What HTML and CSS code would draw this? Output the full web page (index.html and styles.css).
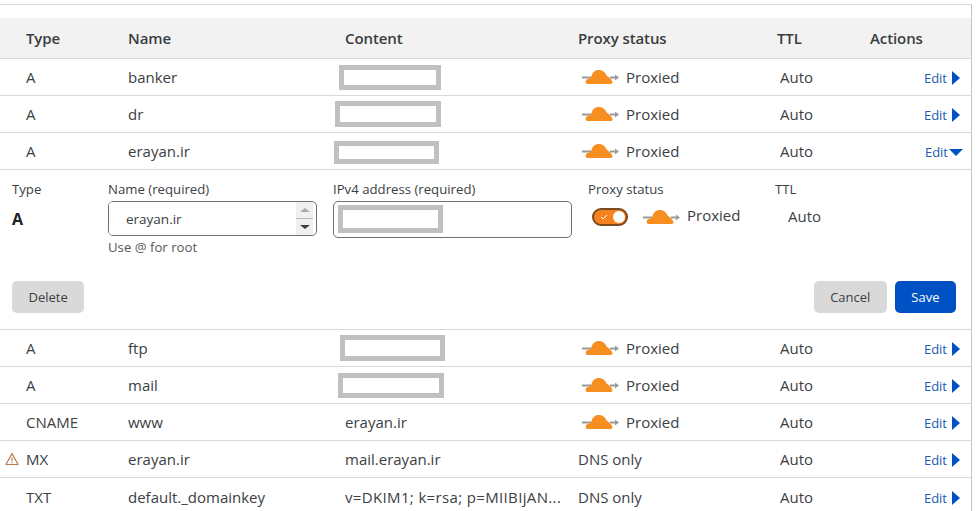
FILE: index.html
```html
<!DOCTYPE html>
<html lang="en">
<head>
    <meta charset="UTF-8">
    <title>DNS records</title>
    <link rel="stylesheet" href="styles.css">
</head>
<body>
<svg class="defs" width="0" height="0">
    <symbol id="cloud" viewBox="0 0 37 14">
        <rect x="0" y="6.5" width="9" height="2" fill="#9a9a9a"/>
        <rect x="28" y="6.5" width="6" height="2" fill="#9a9a9a"/>
        <path d="M33 4.5L37 7.5L33 10.5Z" fill="#9a9a9a"/>
        <path d="M5.5 14C3 14 3 9.5 6 9C8 8.5 9 8 9.5 6C10.5 2.5 13 0 16.5 0C20 0 23 1.5 24.5 5.5C27 7 29.5 9 30.5 12C30.8 13.5 29.5 14 28 14Z" fill="#f78f20"/>
    </symbol>
</svg>
<div class="table">
    <div class="row head">
        <div>Type</div>
        <div>Name</div>
        <div>Content</div>
        <div>Proxy status</div>
        <div>TTL</div>
        <div>Actions</div>
    </div>

    <div class="row">
        <div>A</div>
        <div>banker</div>
        <div><span class="hidden-ip ip-banker"></span></div>
        <div class="proxy"><svg class="cloud"><use href="#cloud"/></svg>Proxied</div>
        <div class="ttl">Auto</div>
        <div class="actions"><a class="edit">Edit</a><span class="arrow-right"></span></div>
    </div>
    <div class="row">
        <div>A</div>
        <div>dr</div>
        <div><span class="hidden-ip ip-dr"></span></div>
        <div class="proxy"><svg class="cloud"><use href="#cloud"/></svg>Proxied</div>
        <div class="ttl">Auto</div>
        <div class="actions"><a class="edit">Edit</a><span class="arrow-right"></span></div>
    </div>
    <div class="row">
        <div>A</div>
        <div>erayan.ir</div>
        <div><span class="hidden-ip ip-root"></span></div>
        <div class="proxy"><svg class="cloud"><use href="#cloud"/></svg>Proxied</div>
        <div class="ttl">Auto</div>
        <div class="actions open"><a class="edit">Edit</a><span class="arrow-down"></span></div>
    </div>

    <form class="editor">
        <div class="fields">
            <div class="field">
                <div class="field-label">Type</div>
                <div class="type-value">A</div>
            </div>
            <div class="field">
                <div class="field-label">Name (required)</div>
                <div class="name-input">
                    <input type="text" value="erayan.ir">
                    <div class="spinner">
                        <div class="spin-half"><span class="spin-up"></span></div>
                        <div class="spin-half"><span class="spin-down"></span></div>
                    </div>
                </div>
                <div class="hint">Use @ for root</div>
            </div>
            <div class="field">
                <div class="field-label">IPv4 address (required)</div>
                <div class="ip-input"><span class="hidden-ip ip-input-box"></span></div>
            </div>
            <div class="field">
                <div class="field-label">Proxy status</div>
                <div class="proxy-edit">
                    <span class="toggle">
                        <svg class="check" viewBox="0 0 8 6"><path d="M1 3l2 2 4-4" fill="none" stroke="#fff" stroke-width="1"/></svg>
                        <span class="knob"></span>
                    </span>
                    <svg class="cloud"><use href="#cloud"/></svg>
                    <span>Proxied</span>
                </div>
            </div>
            <div class="field">
                <div class="field-label">TTL</div>
                <div class="ttl-value">Auto</div>
            </div>
        </div>
        <div class="buttons">
            <button type="button" class="btn">Delete</button>
            <div class="buttons-right">
                <button type="button" class="btn">Cancel</button>
                <button type="button" class="btn primary">Save</button>
            </div>
        </div>
    </form>

    <div class="row">
        <div>A</div>
        <div>ftp</div>
        <div><span class="hidden-ip ip-ftp"></span></div>
        <div class="proxy"><svg class="cloud"><use href="#cloud"/></svg>Proxied</div>
        <div class="ttl">Auto</div>
        <div class="actions"><a class="edit">Edit</a><span class="arrow-right"></span></div>
    </div>
    <div class="row">
        <div>A</div>
        <div>mail</div>
        <div><span class="hidden-ip ip-mail"></span></div>
        <div class="proxy"><svg class="cloud"><use href="#cloud"/></svg>Proxied</div>
        <div class="ttl">Auto</div>
        <div class="actions"><a class="edit">Edit</a><span class="arrow-right"></span></div>
    </div>
    <div class="row">
        <div>CNAME</div>
        <div>www</div>
        <div>erayan.ir</div>
        <div class="proxy"><svg class="cloud"><use href="#cloud"/></svg>Proxied</div>
        <div class="ttl">Auto</div>
        <div class="actions"><a class="edit">Edit</a><span class="arrow-right"></span></div>
    </div>
    <div class="row">
        <div class="type-warn">
            <svg class="warn" viewBox="0 0 14 14">
                <path d="M7 1.5L13 12.5H1Z" fill="none" stroke="#b5794a" stroke-width="1.2" stroke-linejoin="round"/>
                <path d="M7 5.5V9M7 10V11.2" stroke="#b5794a" stroke-width="1.2"/>
            </svg>
            MX
        </div>
        <div>erayan.ir</div>
        <div>mail.erayan.ir</div>
        <div>DNS only</div>
        <div class="ttl">Auto</div>
        <div class="actions"><a class="edit">Edit</a><span class="arrow-right"></span></div>
    </div>
    <div class="row last">
        <div>TXT</div>
        <div>default._domainkey</div>
        <div class="dkim">v=DKIM1; k=rsa; p=MIIBIjAN...</div>
        <div>DNS only</div>
        <div class="ttl">Auto</div>
        <div class="actions"><a class="edit">Edit</a><span class="arrow-right"></span></div>
    </div>
</div>
</body>
</html>
```
FILE: styles.css
```css
html, body {
    height: 511px;
    overflow: hidden;
}

body {
    margin: 0;
    background-color: #fff;
    color: #3c4043;
    font-family: "Open Sans", "Noto Sans", sans-serif;
    font-size: 15px;
}

.defs {
    display: block;
    height: 0;
}

.table {
    width: 972px;
    margin-top: 4px;
    padding-top: 13px;
    box-sizing: border-box;
    height: 507px;
    border-top: 1px solid #d9d9d9;
    border-right: 1px solid #c4c4c4;
}

.row {
    display: grid;
    grid-template-columns: 102px 217px 233px 199px 93px 1fr;
    align-items: center;
    height: 37px;
    padding-left: 26px;
    box-sizing: border-box;
    border-bottom: 1px solid #d9d9d9;
}

.head {
    height: 41px;
    background-color: #f2f2f2;
    font-weight: 600;
    letter-spacing: -0.1px;
    color: #3a3d3f;
}

.last {
    border-bottom: none;
}

.dkim {
    letter-spacing: 0.35px;
}

/* grey boxes that hide the addresses */
.hidden-ip {
    display: block;
    box-sizing: border-box;
    border: 5px solid #c0c0c0;
    background-color: #fff;
}

.ip-banker {
    width: 102px;
    height: 25px;
    margin-left: -6px;
}

.ip-dr {
    width: 106px;
    height: 26px;
    margin-left: -10px;
}

.ip-root {
    width: 105px;
    height: 23px;
    margin: 3px 0 0 -11px;
}

.ip-ftp {
    width: 105px;
    height: 26px;
    margin-left: -5px;
}

.ip-mail {
    width: 106px;
    height: 25px;
    margin-left: -7px;
}

.ip-input-box {
    width: 105px;
    height: 28px;
}

.proxy {
    display: flex;
    align-items: center;
    gap: 7px;
    padding-left: 4px;
}

.cloud {
    width: 37px;
    height: 14px;
    flex: none;
}

.ttl {
    padding-left: 3px;
}

.actions {
    display: flex;
    justify-content: flex-end;
    align-items: center;
    gap: 5px;
    padding: 2px 11px 0 0;
}

.actions.open {
    gap: 1px;
    padding-right: 8px;
}

.edit {
    color: #1a5bab;
    font-size: 13px;
}

.arrow-right {
    width: 0;
    height: 0;
    border-left: 8px solid #0051c3;
    border-top: 7px solid transparent;
    border-bottom: 7px solid transparent;
}

.arrow-down {
    width: 0;
    height: 0;
    border-top: 7px solid #0051c3;
    border-left: 7px solid transparent;
    border-right: 7px solid transparent;
}

.type-warn {
    position: relative;
}

.warn {
    position: absolute;
    left: -21px;
    top: 3px;
    width: 14px;
    height: 14px;
}

/* expanded record */
.editor {
    height: 160px;
    box-sizing: border-box;
    padding: 10px 15px 16px 12px;
    border-bottom: 1px solid #d9d9d9;
    display: flex;
    flex-direction: column;
    justify-content: space-between;
}

.fields {
    display: grid;
    grid-template-columns: 96px 225px 255px 187px 1fr;
}

.field-label {
    font-size: 13.2px;
    line-height: 18px;
    margin-bottom: 3px;
}

.type-value {
    font-weight: 700;
    font-size: 16px;
    line-height: 37px;
    color: #222;
}

.name-input {
    display: flex;
    width: 209px;
    height: 35px;
    box-sizing: border-box;
    border: 1px solid #6f6f6f;
    border-radius: 5px;
    overflow: hidden;
}

.name-input input {
    flex: 1;
    min-width: 0;
    border: none;
    outline: none;
    padding: 0 0 0 17px;
    font-family: inherit;
    font-size: 13.5px;
    color: #3c4043;
}

.spinner {
    width: 17px;
    margin-right: 3px;
    background-color: #f0f0f0;
    display: flex;
    flex-direction: column;
}

.spin-half {
    flex: 1;
    display: flex;
    align-items: center;
    justify-content: center;
}

.spin-half + .spin-half {
    border-top: 1px solid #b5b5b5;
}

.spin-up {
    border-bottom: 4px solid #a9a9a9;
    border-left: 5px solid transparent;
    border-right: 5px solid transparent;
}

.spin-down {
    border-top: 4px solid #404040;
    border-left: 5px solid transparent;
    border-right: 5px solid transparent;
}

.hint {
    font-size: 13.2px;
    margin-top: 2px;
    color: #55585a;
}

.ip-input {
    width: 239px;
    height: 37px;
    box-sizing: border-box;
    border: 1px solid #6f6f6f;
    border-radius: 5px;
    padding: 3px 0 0 4px;
}

.proxy-edit {
    display: flex;
    align-items: center;
    gap: 15px;
    padding: 2px 0 0 4px;
    height: 27px;
}

.proxy-edit .cloud + span {
    margin-left: -8px;
    margin-top: -4px;
}

.toggle {
    position: relative;
    width: 36px;
    height: 18px;
    box-sizing: border-box;
    border: 2px solid #7a4a1c;
    border-radius: 9px;
    background-color: #f6821f;
    flex: none;
}

.check {
    position: absolute;
    left: 6px;
    top: 4px;
    width: 8px;
    height: 6px;
}

.knob {
    position: absolute;
    right: 1px;
    top: 1px;
    width: 12px;
    height: 12px;
    border-radius: 50%;
    background-color: #fff;
}

.ttl-value {
    padding: 5px 0 0 13px;
}

.buttons {
    display: flex;
    justify-content: space-between;
}

.buttons-right {
    display: flex;
    gap: 8px;
}

.btn {
    height: 32px;
    padding: 0 16.5px;
    border: none;
    border-radius: 5px;
    background-color: #d9d9d9;
    font-family: inherit;
    font-size: 13px;
    color: #3c4043;
}

.btn.primary {
    background-color: #0051c3;
    color: #fff;
}
```
